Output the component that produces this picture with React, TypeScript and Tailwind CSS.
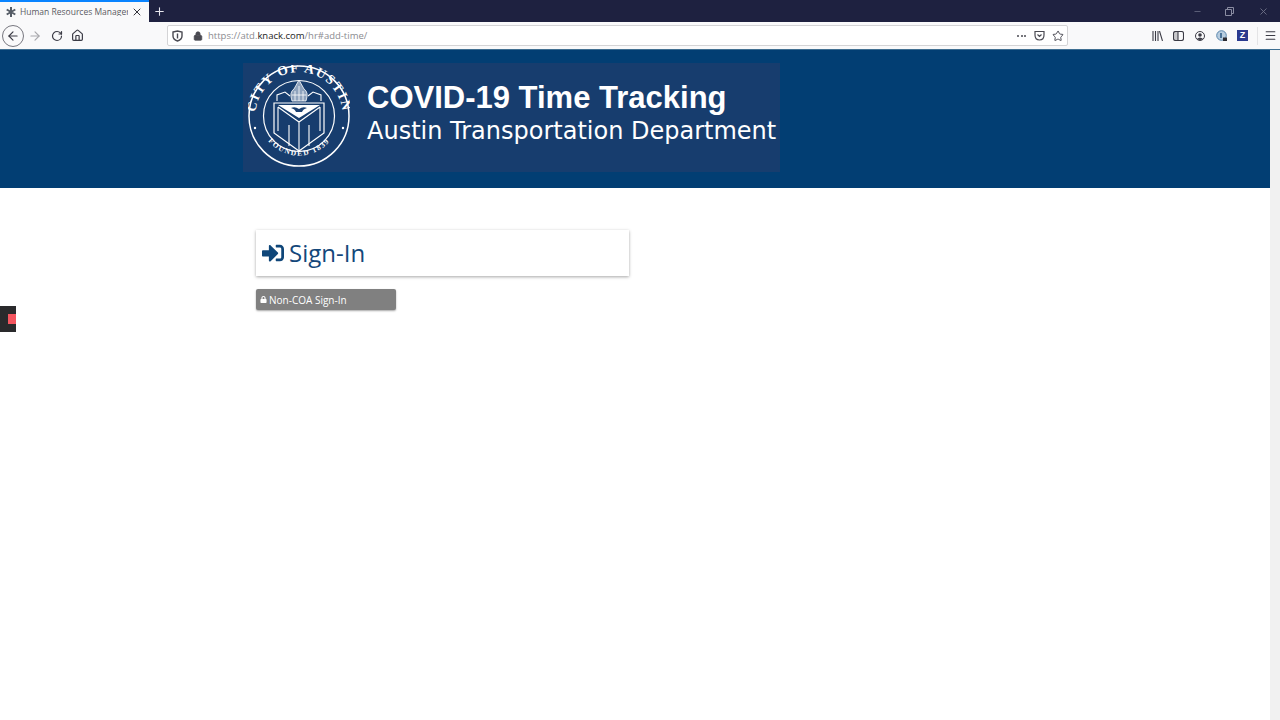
import { FaLock, FaSignInAlt } from 'react-icons/fa';
import { ArrowLeft, ArrowRight, Home, Lock, Menu, Minus, Plus, RotateCw, Star, X } from 'lucide-react';

function Seal() {
  return (
    <svg width="102" height="102" viewBox="0 0 102 102" fill="none" stroke="#fff">
      <circle cx="51" cy="51" r="50" strokeWidth="1.5" />
      <circle cx="51" cy="51" r="35.5" strokeWidth="1.2" />
      <defs>
        <path id="seal-top" d="M 9 62 A 43.5 43.5 0 1 1 93 62" />
        <path id="seal-bottom" d="M 16 70 A 40 40 0 0 0 86 70" />
      </defs>
      <text fill="#fff" stroke="none" fontFamily="'Liberation Serif', serif" fontSize="13.5" fontWeight="700" letterSpacing="1.5">
        <textPath href="#seal-top" startOffset="50%" textAnchor="middle">CITY OF AUSTIN</textPath>
      </text>
      <text fill="#fff" stroke="none" fontFamily="'Liberation Serif', serif" fontSize="7.5" fontWeight="700" letterSpacing="1.4">
        <textPath href="#seal-bottom" startOffset="50%" textAnchor="middle">FOUNDED 1839</textPath>
      </text>
      <circle cx="7" cy="63" r="1.2" fill="#fff" stroke="none" />
      <circle cx="95" cy="63" r="1.2" fill="#fff" stroke="none" />
      {/* shield */}
      <path d="M26 38 L76 38 L76 68 L51 86 L26 68 Z" strokeWidth="1.2" />
      <path d="M30 40 L72 40 L51 53 Z" fill="#fff" stroke="none" />
      <path d="M41 60 V81 M61 60 V81 M30 42 V66 M72 42 V66 M30 42 L51 57 L72 42 M51 57 V86" strokeWidth="1.1" />
      {/* bird on the shield */}
      <path d="M43 43 Q47 41 51 44 Q55 41 59 43 Q55 44 54 47 L48 47 Q47 44 43 43 Z" fill="#1a3f70" stroke="none" />
      {/* crest */}
      <path d="M29 36 L29 30 L37 27 L42 31 M73 36 L73 30 L65 27 L60 31" strokeWidth="1.1" />
      <path d="M44 36 Q41 27 46 24 L51 15 L56 24 Q61 27 58 36 Z" fill="#8fa3bd" stroke="#fff" strokeWidth="0.8" />
      <path d="M47 36 V26 M51 36 V21 M55 36 V26 M44 30 H58" strokeWidth="0.8" />
    </svg>
  );
}

function Toolbar() {
  return (
    <div className="flex h-[28px] items-center border-b border-[#3f6f92] bg-[#f9f9fa] text-[#3b3b45]">
      <div className="ml-[2px] flex h-[22px] w-[22px] items-center justify-center rounded-full border border-[#77777f]">
        <ArrowLeft size={14} />
      </div>
      <ArrowRight size={14} className="ml-[4px] text-[#a8a8ac]" />
      <RotateCw size={12} className="ml-[9px]" strokeWidth={2.4} />
      <Home size={13} className="ml-[8px]" strokeWidth={2.2} />

      {/* url bar */}
      <div className="ml-[83px] flex h-[21px] w-[901px] items-center rounded-[2px] border border-[#d4d4d6] bg-white">
        <svg width="11" height="12" viewBox="0 0 11 12" className="ml-[4px]" fill="none" stroke="#4a4a52" strokeWidth="1.4">
          <path d="M1 2 L5.5 1 L10 2 V6 Q10 9.5 5.5 11 Q1 9.5 1 6 Z" />
          <path d="M5.5 3.5 V8.5" />
        </svg>
        <Lock size={10} className="ml-[10px] fill-[#4a4a52] text-[#4a4a52]" />
        <div className="ml-[5px] flex-1 font-['Open_Sans',sans-serif] text-[9.5px] leading-none text-[#8b8b90]">
          https://atd.<span className="text-[#1c1c22]">knack.com</span>/hr#add-time/
        </div>
        <div className="flex gap-[1.5px]">
          <span className="h-[2px] w-[2px] rounded-full bg-[#4a4a52]" />
          <span className="h-[2px] w-[2px] rounded-full bg-[#4a4a52]" />
          <span className="h-[2px] w-[2px] rounded-full bg-[#4a4a52]" />
        </div>
        <svg width="11" height="11" viewBox="0 0 11 11" className="ml-[8px]" fill="none" stroke="#4a4a52" strokeWidth="1.2">
          <path d="M1 1.5 H10 V5 Q10 10 5.5 10 Q1 10 1 5 Z" />
          <path d="M3.5 4.5 L5.5 6.5 L7.5 4.5" />
        </svg>
        <Star size={12} className="ml-[7px] mr-[3px]" strokeWidth={1.8} />
      </div>

      {/* right side icons */}
      <svg width="11" height="10" viewBox="0 0 11 10" className="ml-[84px]" fill="none" stroke="#3b3b45" strokeWidth="1.1">
        <path d="M1 0 V10 M3.5 0 V10 M6 0 V10 M7.5 0 L10.5 10" />
      </svg>
      <svg width="11" height="10" viewBox="0 0 11 10" className="ml-[10px]" fill="none" stroke="#3b3b45" strokeWidth="1.1">
        <rect x="0.5" y="0.5" width="10" height="9" rx="2" />
        <path d="M5 0.5 V9.5" />
        <path d="M1 1 H5 V9 H1 Z" fill="#3b3b45" stroke="none" opacity="0.25" />
      </svg>
      <svg width="10" height="10" viewBox="0 0 10 10" className="ml-[11px]">
        <circle cx="5" cy="5" r="4.5" fill="none" stroke="#3b3b45" />
        <circle cx="5" cy="4" r="1.8" fill="#3b3b45" />
        <path d="M1.8 8 Q5 5 8.2 8 Q5 10 1.8 8 Z" fill="#3b3b45" />
      </svg>
      <svg width="12" height="12" viewBox="0 0 12 12" className="ml-[11px]">
        <circle cx="5.5" cy="5.5" r="4.8" fill="#b8cde0" stroke="#5a86ad" />
        <path d="M5 3 V8" stroke="#1d4f7c" strokeWidth="1.4" />
        <rect x="7" y="7.5" width="4" height="3.5" fill="#2b2b33" />
      </svg>
      <div className="ml-[9px] flex h-[11px] w-[11px] items-center justify-center bg-[#2a3a8f] font-['Liberation_Sans',sans-serif] text-[9px] font-bold leading-none text-white">
        Z
      </div>
      <div className="ml-[9px] h-[18px] w-px bg-[#e4e4e6]" />
      <Menu size={13} className="ml-[6px]" strokeWidth={2} />
    </div>
  );
}

export default function App() {
  return (
    <div className="relative flex h-screen w-screen flex-col overflow-hidden bg-white">
      {/* tab strip */}
      <div className="flex h-[22px] items-stretch bg-[#1e2140]">
        <div className="flex w-[149px] items-center border-t-2 border-[#0a84ff] bg-[#f9f9fa] pl-[6px]">
          <svg width="10" height="10" viewBox="0 0 10 10" stroke="#555c66" strokeWidth="2">
            <path d="M5 0 V10 M0.7 2.5 L9.3 7.5 M0.7 7.5 L9.3 2.5" />
          </svg>
          <span className="ml-[4px] w-[108px] overflow-hidden whitespace-nowrap font-['Open_Sans',sans-serif] text-[8.5px] leading-none text-[#5b5b63]">
            Human Resources Manager | P
          </span>
          <X size={12} className="ml-[3px] text-[#33333b]" />
        </div>
        <div className="flex w-[21px] items-center justify-center">
          <Plus size={13} className="text-[#e8e8ee]" />
        </div>
        <div className="flex flex-1 items-center justify-end text-[#6e7188]">
          <Minus size={9} />
          <svg width="9" height="9" viewBox="0 0 9 9" className="ml-[23px]" fill="none" stroke="#8a8da2">
            <path d="M0.5 2.5 H6.5 V8.5 H0.5 Z M2.5 2.5 V0.5 H8.5 V6.5 H6.5" />
          </svg>
          <X size={11} className="ml-[24px] mr-[11px]" />
        </div>
      </div>

      <Toolbar />

      <div className="flex min-h-0 flex-1">
        <div className="min-w-0 flex-1">
          {/* banner */}
          <div className="h-[138px] bg-[#023e73] pl-[243px] pt-[13px]">
            <div className="flex h-[109px] w-[537px] bg-[#173d6e]">
              <div className="ml-[5px] mt-[2px]">
                <Seal />
              </div>
              <div className="ml-[17px] mt-[17px] text-white">
                <div className="whitespace-nowrap font-['Liberation_Sans',sans-serif] text-[31px] font-bold leading-[36px]">
                  COVID-19 Time Tracking
                </div>
                <div className="mt-[1px] whitespace-nowrap font-['DejaVu_Sans',sans-serif] text-[24px] leading-[28px]">
                  Austin Transportation Department
                </div>
              </div>
            </div>
          </div>

          {/* sign in */}
          <div className="ml-[256px] mt-[42px] w-[373px]">
            <div className="flex h-[46px] items-center bg-white pl-[6px] shadow-[0_1px_3px_rgba(0,0,0,0.35)]">
              <FaSignInAlt size={22} className="text-[#0f4679]" />
              <span className="ml-[5px] font-['Open_Sans',sans-serif] text-[24px] leading-none text-[#14477a]">Sign-In</span>
            </div>
            <div className="mt-[13px] flex h-[21px] w-[140px] items-center rounded-[2px] bg-[#808080] pl-[4px] shadow-[0_1px_2px_rgba(0,0,0,0.35)]">
              <FaLock size={7} className="text-white" />
              <span className="ml-[2px] font-['Open_Sans',sans-serif] text-[10px] leading-none text-white">Non-COA Sign-In</span>
            </div>
          </div>
        </div>
        {/* scrollbar */}
        <div className="w-[10px] bg-[#f1f1f1]" />
      </div>

      {/* floating widget on the left edge */}
      <div className="absolute left-0 top-[306px] flex h-[26px] w-[16px] items-center justify-end bg-[#2a2a2c]">
        <div className="h-[10px] w-[8px] bg-[#f4555f]" />
      </div>
    </div>
  );
}
